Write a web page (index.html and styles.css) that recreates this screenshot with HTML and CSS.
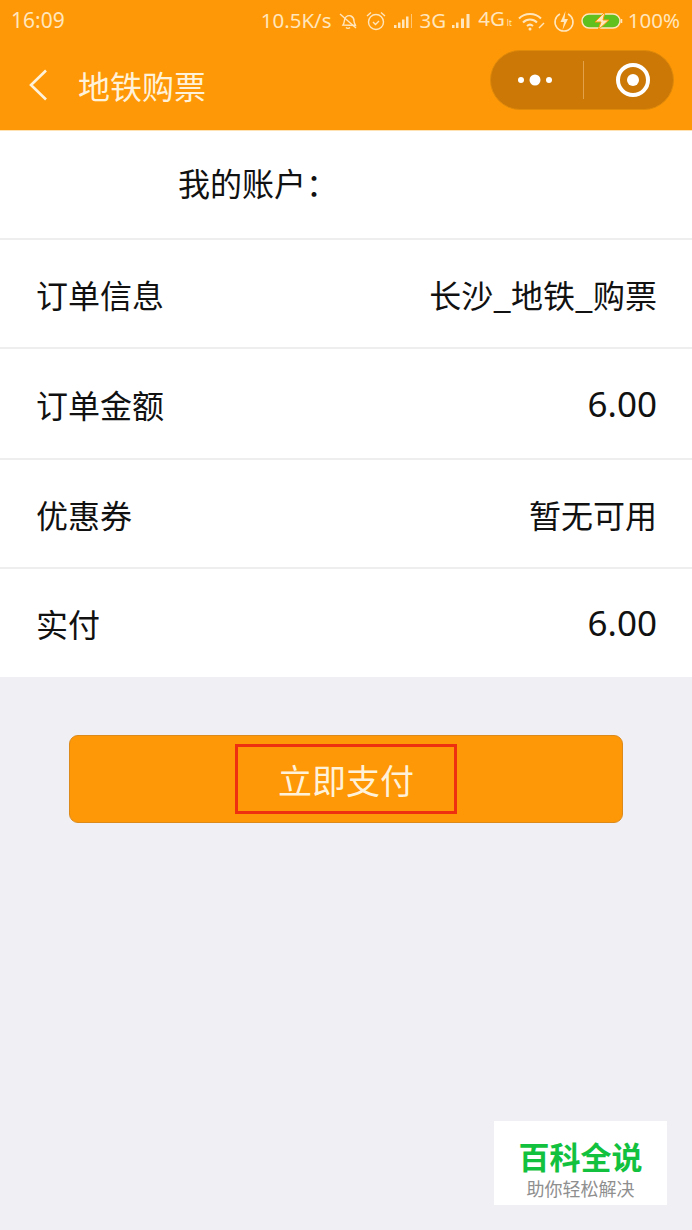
FILE: index.html
```html
<!DOCTYPE html>
<html lang="zh">
<head>
<meta charset="utf-8">
<title>地铁购票</title>
<link rel="stylesheet" href="styles.css">
</head>
<body>
<div class="page">
  <header class="top">
    <div class="status">
      <span class="time">16:09</span>
      <div class="status-right">
        <span>10.5K/s</span>
        <svg class="ic" width="22" height="22" viewBox="0 0 22 22" fill="none" stroke="#ffe6bd" stroke-width="1.4"><path d="M6 15c1.5-2 1-4 2-6.500 1-2.500 4-3.500 6-2.500 2 1 3 3 3 5s1 3 1.500 4.500z"/><path d="M9 17.500c1 1.200 3 1.200 4 0M3 4l16 14"/></svg>
        <svg class="ic" width="24" height="22" viewBox="0 0 24 22" fill="none" stroke="#ffe6bd" stroke-width="1.4"><circle cx="12" cy="12" r="7.500"/><path d="M9 12l2.500 2.500 3.500-3.500M3 6l4-3.500M21 6l-4-3.500"/></svg>
        <svg class="ic" width="22" height="18" viewBox="0 0 22 18" fill="#ffe6bd"><rect x="1" y="13" width="2.500" height="3"/><rect x="5" y="10.500" width="2.500" height="5.500"/><rect x="9" y="7.500" width="2.500" height="8.500"/><rect x="13" y="4.500" width="2.500" height="11.500"/><rect x="18" y="2" width="1" height="14" opacity=".6"/></svg>
        <span>3G</span>
        <svg class="ic" width="22" height="18" viewBox="0 0 22 18" fill="#ffe6bd"><rect x="1" y="13" width="2.500" height="3"/><rect x="5" y="10.500" width="2.500" height="5.500"/><rect x="10" y="6.500" width="3" height="9.500"/><rect x="15.500" y="2" width="3" height="14"/></svg>
        <span class="net4">4G<small class="lte">lt</small></span>
        <svg class="ic" width="30" height="22" viewBox="0 0 30 22" fill="none" stroke="#ffe6bd" stroke-width="2"><path d="M2 8.500c6-6 16-6 22 0M6 12.500c4-4 10-4 14 0M10 16c2-1.800 4-1.800 6 0"/><circle cx="13" cy="19" r="1.500" fill="#ffe6bd" stroke="none"/><path d="M22 18l5-5" stroke-width="1.500"/></svg>
        <svg class="ic" width="24" height="24" viewBox="0 0 24 24" fill="none" stroke="#ffe6bd" stroke-width="1.600"><path d="M8 5a9 9 0 1 0 8 0"/><path d="M13.500 2L8.500 13h3.500l-1.500 8 5.500-11h-3.500z" fill="#ffe6bd" stroke="none"/></svg>
        <svg class="ic" width="42" height="20" viewBox="0 0 42 20"><rect x="1" y="3" width="38" height="14" rx="7" fill="#5fc01e" stroke="#ffe6bd" stroke-width="1.500"/><path d="M40.500 8v4" stroke="#ffe6bd" stroke-width="1.500"/><path d="M24 1L14 11h6l-3 8 11-10h-6z" fill="#ffe6bd" stroke="#ff9807"/></svg>
        <span>100%</span>
      </div>
    </div>
    <div class="nav">
      <svg class="back" width="22" height="34" viewBox="0 0 22 34" fill="none" stroke="#fff2da" stroke-width="2.600"><path d="M19 2.500L4 17l15 14.500"/></svg>
      <h1 class="title">地铁购票</h1>
      <div class="capsule">
        <svg width="38" height="14" viewBox="0 0 38 14" fill="#fff"><circle cx="5" cy="7" r="3"/><circle cx="19" cy="7" r="5.500"/><circle cx="33" cy="7" r="3"/></svg>
        <span class="cap-line"></span>
        <svg width="36" height="36" viewBox="0 0 36 36" fill="none"><circle cx="18" cy="18" r="15" stroke="#fff" stroke-width="4"/><circle cx="18" cy="18" r="6" fill="#fff"/></svg>
      </div>
    </div>
  </header>

  <section class="list">
    <div class="row row-account"><span>我的账户：</span></div>
    <div class="row"><span>订单信息</span><span>长沙_地铁_购票</span></div>
    <div class="row row-tall"><span>订单金额</span><span class="num">6.00</span></div>
    <div class="row"><span>优惠券</span><span>暂无可用</span></div>
    <div class="row row-last"><span>实付</span><span class="num">6.00</span></div>
  </section>

  <div class="pay-wrap">
    <button class="pay"><span class="pay-label">立即支付</span></button>
  </div>

  <aside class="mark">
    <div class="mark-title">百科全说</div>
    <div class="mark-sub">助你轻松解决</div>
  </aside>
</div>
</body>
</html>
```

FILE: styles.css
```css
* { box-sizing: border-box; }
html, body { margin: 0; padding: 0; }
body {
  background: #efeff4;
  font-family: "Noto Sans CJK SC", "Noto Sans", sans-serif;
}
.page {
  position: relative;
  width: 692px;
  height: 1230px;
  overflow: hidden;
}
.top {
  height: 131px;
  background: #ff9807;
  border-bottom: 1px solid #ffe2b4;
}
.status {
  height: 41px;
  padding: 0 12px 0 11px;
  display: flex;
  align-items: center;
  justify-content: space-between;
  color: #ffe6bd;
  font-family: "Noto Sans", sans-serif;
  font-size: 21px;
  line-height: 41px;
}
.status-right {
  display: flex;
  align-items: center;
  gap: 5px;
  font-size: 20.500px;
}
.ic { display: block; flex: none; }
.net4 { display: flex; align-items: baseline; }
.lte { font-size: 8px; margin-left: 2px; }
.nav {
  height: 89px;
  display: flex;
  align-items: center;
  padding: 0 18px 0 27px;
  position: relative;
}
.back { flex: none; margin-top: -2px; }
.title {
  margin: -1px 0 0 29px;
  flex: 1;
  color: #fff2da;
  font-size: 32px;
  font-weight: 400;
  line-height: 40px;
}
.capsule {
  width: 184px;
  height: 60px;
  margin-top: -12px;
  border-radius: 30px;
  background: #cb7806;
  border: 1px solid #e08a0a;
  display: flex;
  align-items: center;
  padding: 0 9px 0 25px;
}
.cap-line {
  width: 1px;
  height: 38px;
  margin: 0 31px 0 29px;
  background: #e3a24a;
}
.list { background: #fff; }
.row {
  height: 109px;
  padding: 0 35px 0 36px;
  display: flex;
  align-items: center;
  justify-content: space-between;
  border-bottom: 2px solid #eeeeee;
  color: #111;
  font-size: 32px;
  line-height: 44px;
}
.row-account {
  height: 109px;
  padding-left: 178px;
  padding-bottom: 5px;
  justify-content: flex-start;
}
.row-tall { height: 111px; }
.row-last { height: 108px; border-bottom: 0; }
.num { font-family: "Noto Sans", sans-serif; font-size: 35px; }
.pay-wrap { padding: 58px 69px 0; }
.pay {
  display: flex;
  align-items: center;
  justify-content: center;
  width: 554px;
  height: 88px;
  padding: 0;
  border: 1px solid #dc8a1a;
  border-radius: 9px;
  background: #ff9807;
  font-family: inherit;
}
.pay-label {
  width: 222px;
  height: 70px;
  display: flex;
  align-items: center;
  justify-content: center;
  border: 3px solid #ee2f10;
  color: #fff2da;
  font-size: 34px;
}
.mark {
  position: absolute;
  left: 494px;
  top: 1121px;
  width: 173px;
  height: 84px;
  background: #fff;
  text-align: center;
}
.mark-title {
  margin-top: 13px;
  color: #12c13e;
  font-size: 31px;
  font-weight: 700;
  line-height: 44px;
}
.mark-sub {
  margin-top: -2px;
  color: #8f8f8f;
  font-size: 18px;
  line-height: 24px;
}
```
